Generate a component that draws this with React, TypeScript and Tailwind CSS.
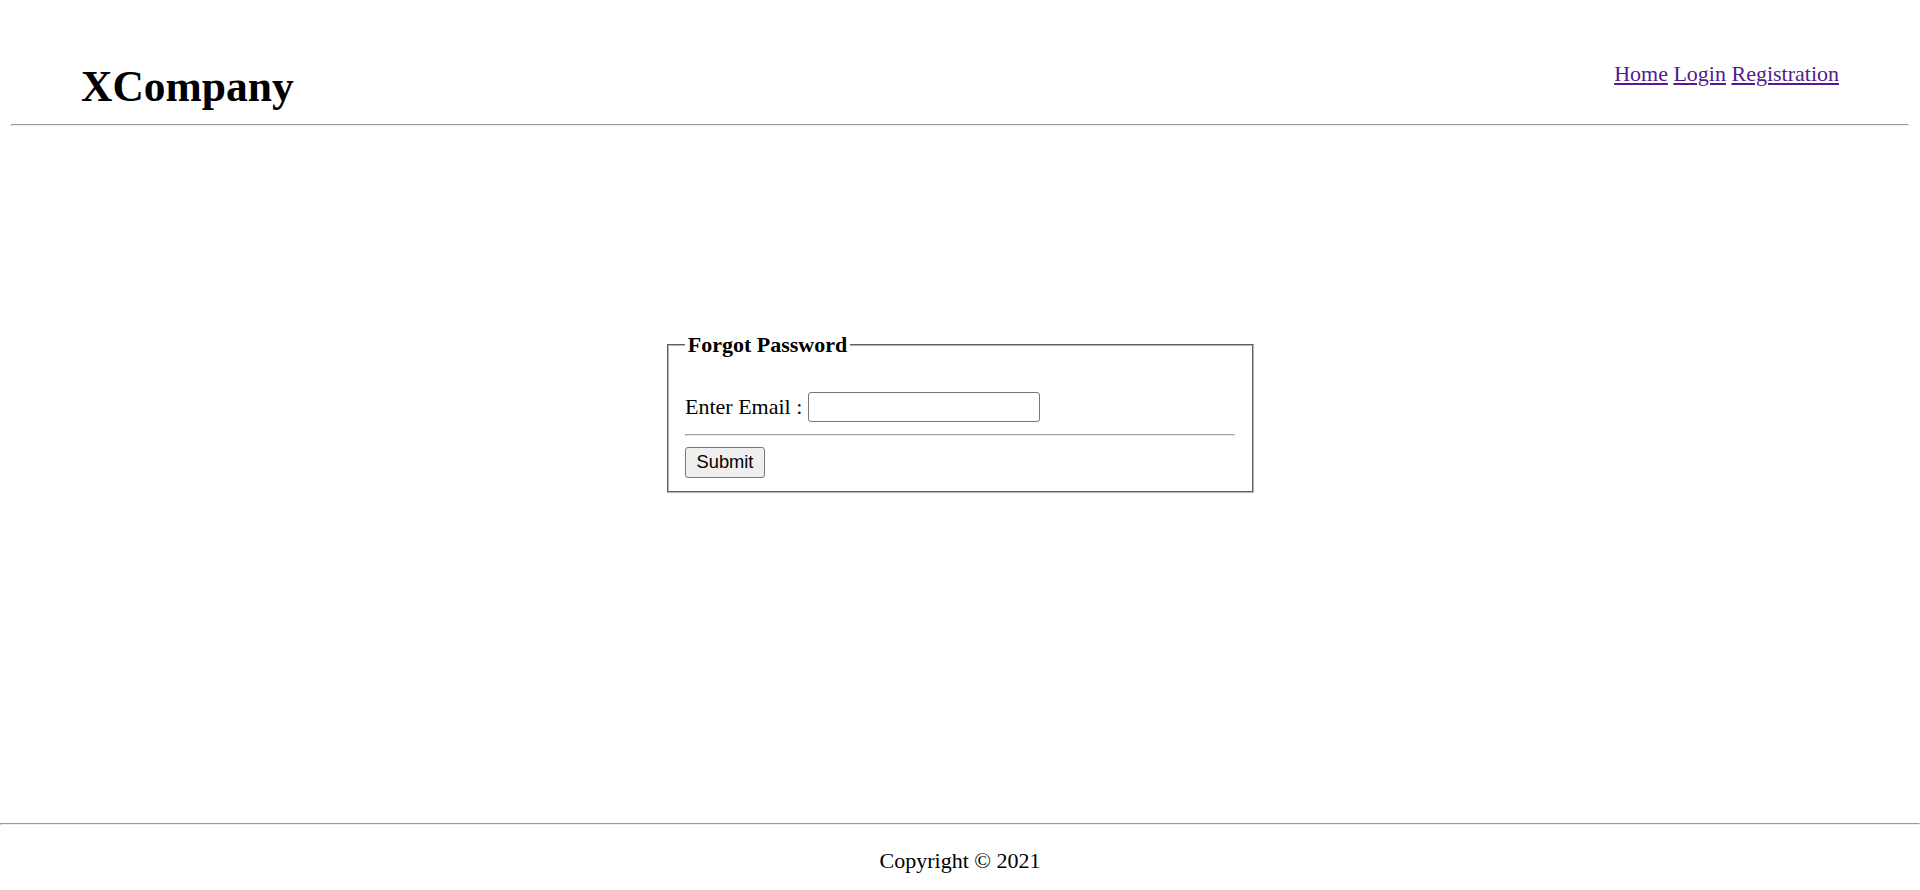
import { useState } from "react";

function Rule({ className = "" }: { className?: string }) {
  return (
    <div
      className={`h-[2px] border-t border-l border-t-[#9a9a9a] border-l-[#9a9a9a] border-b border-r border-b-[#eeeeee] border-r-[#eeeeee] ${className}`}
    ></div>
  );
}

function App() {
  const [email, setEmail] = useState("");

  return (
    <div className="min-h-screen flex flex-col bg-white text-black text-[22px] font-['Liberation_Serif','Times_New_Roman',serif]">
      <header className="mx-[11px]">
        <div className="flex justify-between items-start px-[70px] pt-[61px]">
          <h1 className="text-[43.5px] leading-[51px] font-bold">XCompany</h1>
          <nav className="flex gap-[5.5px] leading-[25px]">
            <a href="#" className="text-[#551a8b] underline">
              Home
            </a>
            <a href="#" className="text-[#551a8b] underline">
              Login
            </a>
            <a href="#" className="text-[#551a8b] underline">
              Registration
            </a>
          </nav>
        </div>
        <Rule className="mt-[12px]" />
      </header>

      <main className="flex-1">
        <fieldset className="mx-auto mt-[206px] w-[587px] border-2 [border-style:groove] border-[#b4b4b4] px-[16.5px] pt-[7.7px] pb-[13.75px]">
          <legend className="px-[2.75px] font-bold leading-[25px]">
            Forgot Password
          </legend>
          <div className="mt-[27px] flex items-center h-[30px]">
            <span className="leading-[25px]">Enter Email :</span>
            <input
              type="email"
              value={email}
              onChange={(e) => setEmail(e.target.value)}
              className="ml-[5.5px] w-[232px] h-[30px] border border-[#767676] rounded-[3px] px-[3px] text-[18px] outline-none"
            />
          </div>
          <Rule className="mt-[12px]" />
          <button className="mt-[11px] w-[80px] h-[31px] bg-[#efefef] border border-[#767676] rounded-[3px] text-[18.3px] font-['Liberation_Sans',Arial,sans-serif]">
            Submit
          </button>
        </fieldset>
      </main>

      <footer className="h-[67px]">
        <Rule />
        <p className="mt-[23px] text-center leading-[25px]">Copyright © 2021</p>
      </footer>
    </div>
  );
}

export default App;
